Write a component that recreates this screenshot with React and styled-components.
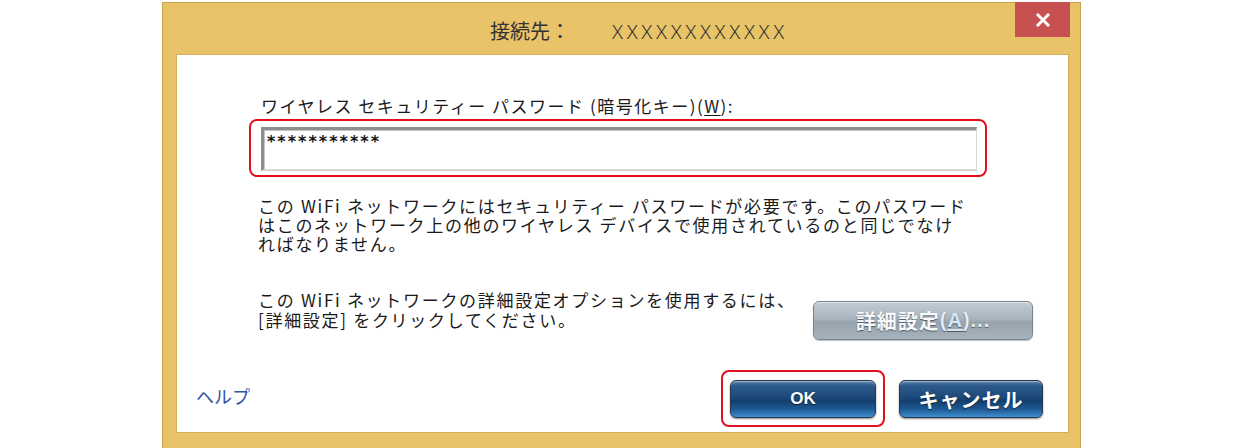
import React from "react";
import styled, { createGlobalStyle } from "styled-components";

const Global = createGlobalStyle`
  html, body { margin: 0; padding: 0; background: #ffffff; }
  body { font-family: "Noto Sans CJK JP", "Noto Sans", sans-serif; }
`;

const Page = styled.div`
  width: 1240px;
  height: 448px;
  overflow: hidden;
  padding: 2px 0 0 162px;
  box-sizing: border-box;
`;

const Dialog = styled.div`
  width: 919px;
  height: 450px;
  box-sizing: border-box;
  background: #e8c368;
  border: 1px solid #c9a252;
  display: flex;
  flex-direction: column;
`;

const TitleBar = styled.div`
  height: 51px;
  display: flex;
  align-items: flex-start;
`;

const Title = styled.div`
  flex: 1;
  padding: 14px 0 0 327px;
  font-size: 20px;
  line-height: 28px;
  color: #333333;
  white-space: nowrap;
`;

const TitleX = styled.span`
  margin-left: 42px;
  letter-spacing: 3.7px;
  font-family: "Noto Sans", sans-serif;
  font-weight: 300;
`;

const CloseButton = styled.div`
  width: 55px;
  height: 35px;
  margin-right: 10px;
  margin-top: -1px;
  background: #c75050;
  display: flex;
  align-items: center;
  justify-content: center;
`;

const Panel = styled.div`
  margin: 0 11px 0 13px;
  height: 379px;
  box-sizing: border-box;
  background: #ffffff;
  border: 1px solid #d2ad5c;
  display: flex;
  flex-direction: column;
  font-size: 17px;
  color: #1a1a1a;
`;

const Label = styled.div`
  margin: 41px 0 0 84px;
  line-height: 20px;
  letter-spacing: 1.5px;
  white-space: nowrap;
`;

const Key = styled.span`
  text-decoration: underline;
  text-underline-offset: 2px;
`;

const Highlight = styled.div`
  box-sizing: border-box;
  border: 2px solid #e2111f;
  border-radius: 8px;
  padding: ${(p) => p.$pad};
  margin: ${(p) => p.$margin};
  width: ${(p) => p.$width};
  display: flex;
`;

const Input = styled.div`
  flex: 1;
  height: 44px;
  box-sizing: border-box;
  border-top: 3px solid #8e8e8e;
  border-left: 3px solid #8e8e8e;
  border-right: 1px solid #d6d6d6;
  border-bottom: 2px solid #d6d6d6;
  box-shadow: inset 1px 1px 0 #c4c4c4;
  padding: 3px 0 0 3px;
  font-family: "DejaVu Sans", sans-serif;
  font-weight: bold;
  font-size: 16px;
  line-height: 18px;
  letter-spacing: 2px;
  color: #111;
`;

const Paragraph = styled.div`
  margin: ${(p) => p.$margin};
  line-height: ${(p) => p.$lh};
  letter-spacing: 1.7px;
  white-space: nowrap;
`;

const AdvancedRow = styled.div`
  margin-top: 37px;
  display: flex;
  align-items: flex-start;
  padding-right: 35px;
`;

const GrayButton = styled.div`
  margin: 11px 0 0 auto;
  width: 220px;
  height: 39px;
  box-sizing: border-box;
  border: 1px solid #76838e;
  border-radius: 6px;
  background: linear-gradient(
    to bottom,
    #c3ccd3 0%,
    #a9b4bd 45%,
    #97a3ad 55%,
    #a6b2bc 100%
  );
  box-shadow: inset 0 1px 0 rgba(255, 255, 255, 0.5), 0 1px 1px rgba(0, 0, 0, 0.25);
  display: flex;
  align-items: center;
  justify-content: center;
  font-size: 20px;
  font-weight: bold;
  color: #f8fafc;
  letter-spacing: 1px;
  text-shadow: 0 1px 1px rgba(50, 60, 70, 0.75);
  white-space: nowrap;
`;

const AccessA = styled.span`
  color: #d9e6f7;
  text-decoration: underline;
  text-underline-offset: 2px;
  font-family: "Liberation Sans", sans-serif;
`;

const Paren = styled.span`
  font-family: "Liberation Sans", sans-serif;
  color: #e6ecf6;
`;

const BottomRow = styled.div`
  margin-top: 30px;
  display: flex;
  align-items: flex-start;
  padding: 0 25px 0 19px;
`;

const HelpLink = styled.div`
  margin-top: 14px;
  font-size: 18px;
  line-height: 24px;
  color: #3453a5;
  white-space: nowrap;
`;

const Spacer = styled.div`
  flex: 1;
`;

const BlueButton = styled.div`
  width: ${(p) => p.$width};
  height: 38px;
  margin-top: ${(p) => p.$top || "0px"};
  margin-left: ${(p) => p.$left || "0px"};
  box-sizing: border-box;
  border: 1px solid #25384d;
  border-radius: 6px;
  background: linear-gradient(
    to bottom,
    #6f8fb0 0%,
    #2c5a8a 12%,
    #1d4a7a 45%,
    #133e6c 55%,
    #1f5c98 80%,
    #3f8fd0 100%
  );
  box-shadow: inset 0 1px 0 rgba(255, 255, 255, 0.35), 0 1px 2px rgba(0, 0, 0, 0.45);
  display: flex;
  align-items: center;
  justify-content: center;
  color: #ffffff;
  font-weight: bold;
  font-size: ${(p) => p.$size};
  font-family: ${(p) => p.$font};
  letter-spacing: ${(p) => p.$ls || "0px"};
  text-shadow: 0 1px 1px rgba(0, 0, 0, 0.6);
  white-space: nowrap;
`;

export default function App() {
  return (
    <>
      <Global />
      <Page>
        <Dialog>
          <TitleBar>
            <Title>
              接続先：<TitleX>XXXXXXXXXXXX</TitleX>
            </Title>
            <CloseButton>
              <svg width="14" height="14" viewBox="0 0 14 14">
                <path d="M2 2 L12 12 M12 2 L2 12" stroke="#ffffff" strokeWidth="3" strokeLinecap="square" />
              </svg>
            </CloseButton>
          </TitleBar>
          <Panel>
            <Label>
              ワイヤレス セキュリティー パスワード (暗号化キー)(<Key>W</Key>):
            </Label>
            <Highlight $pad="6px 8px 4px 10px" $margin="3px 0 0 72px" $width="738px">
              <Input>***********</Input>
            </Highlight>
            <Paragraph $margin="19px 0 0 81px" $lh="19px">
              この WiFi ネットワークにはセキュリティー パスワードが必要です。このパスワード
              <br />
              はこのネットワーク上の他のワイヤレス デバイスで使用されているのと同じでなけ
              <br />
              ればなりません。
            </Paragraph>
            <AdvancedRow>
              <Paragraph $margin="0 0 0 81px" $lh="20px">
                この WiFi ネットワークの詳細設定オプションを使用するには、
                <br />
                [詳細設定] をクリックしてください。
              </Paragraph>
              <GrayButton>
                詳細設定<Paren>(</Paren>
                <AccessA>A</AccessA>
                <Paren>)...</Paren>
              </GrayButton>
            </AdvancedRow>
            <BottomRow>
              <HelpLink>ヘルプ</HelpLink>
              <Spacer />
              <Highlight $pad="8px 6px 7px 7px" $margin="0" $width="164px">
                <BlueButton $width="146px" $size="17px" $font='"Liberation Sans", sans-serif'>
                  OK
                </BlueButton>
              </Highlight>
              <BlueButton
                $width="144px"
                $top="10px"
                $left="14px"
                $size="20px"
                $font='"Noto Sans CJK JP", sans-serif'
                $ls="1px"
              >
                キャンセル
              </BlueButton>
            </BottomRow>
          </Panel>
        </Dialog>
      </Page>
    </>
  );
}
